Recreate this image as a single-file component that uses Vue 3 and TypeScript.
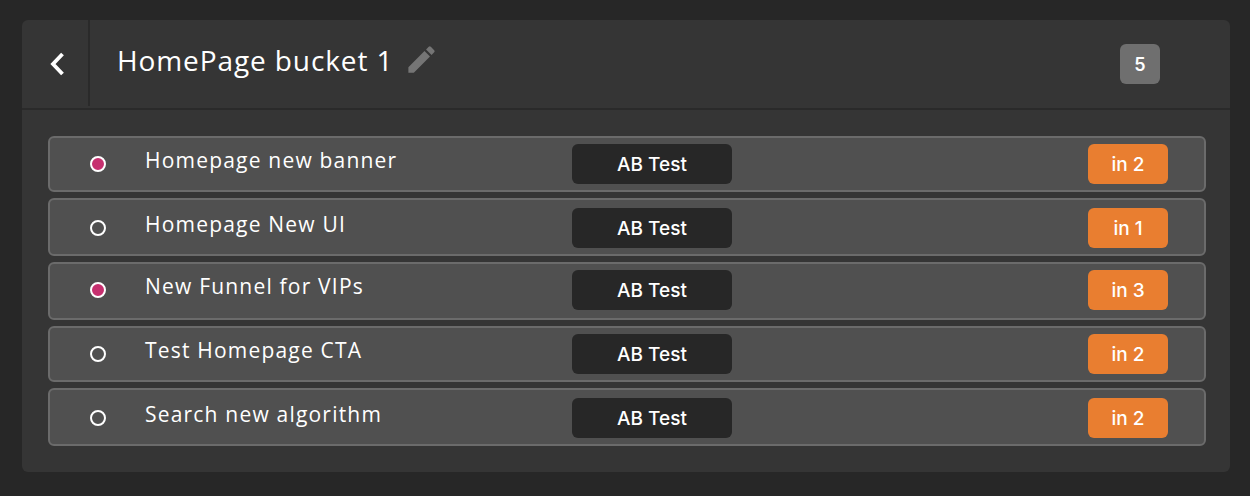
<script setup lang="ts">
type Experiment = { name: string; live: boolean; tag: string; tall: boolean; offset: boolean }

const experiments: Experiment[] = [
  { name: "Homepage new banner", live: true, tag: "in 2", tall: false, offset: false },
  { name: "Homepage New UI", live: false, tag: "in 1", tall: true, offset: true },
  { name: "New Funnel for VIPs", live: true, tag: "in 3", tall: true, offset: false },
  { name: "Test Homepage CTA", live: false, tag: "in 2", tall: false, offset: false },
  { name: "Search new algorithm", live: false, tag: "in 2", tall: true, offset: true },
];
</script>

<template>
  <div class="page">
    <div class="panel">
      <div class="header">
        <button class="back">
          <svg width="18" height="26" viewBox="0 0 18 26">
            <path d="M14.5 3 L5 13 L14.5 23" fill="none" stroke="#fff" stroke-width="3.8" />
          </svg>
        </button>
        <div class="title-wrap">
          <h1 class="title">HomePage bucket 1</h1>
          <svg class="edit" width="35" height="35" viewBox="0 0 24 24">
            <path fill="#757575" d="M3 17.25V21h3.75L17.81 9.94l-3.75-3.75L3 17.25zM20.71 7.04a1 1 0 0 0 0-1.41l-2.34-2.34a1 1 0 0 0-1.41 0l-1.83 1.83 3.75 3.75 1.83-1.83z" />
          </svg>
        </div>
        <span class="count">5</span>
      </div>
      <div class="list">
        <div v-for="item in experiments" :key="item.name" :class="['row', { tall: item.tall, offset: item.offset }]">
          <span :class="['dot', { live: item.live }]"></span>
          <span class="name">{{ item.name }}</span>
          <span class="type">AB Test</span>
          <span class="tag">{{ item.tag }}</span>
        </div>
      </div>
    </div>
  </div>
</template>

<style>
html,
body {
  margin: 0;
  background: #272727;
}
</style>

<style scoped>
.page {
  height: 496px;
  box-sizing: border-box;
  padding: 20px 20px 24px 22px;
  background: #272727;
  font-family: "Inter", sans-serif;
  overflow: hidden;
}
.panel {
  height: 452px;
  background: #353535;
  border-radius: 6px;
  display: flex;
  flex-direction: column;
}
.header {
  height: 88px;
  flex: none;
  display: flex;
  border-bottom: 2px solid #2a2a2a;
}
.back {
  width: 62px;
  height: 84px;
  flex: none;
  padding: 2px 0 0 4px;
  margin: 0;
  background: none;
  border: none;
  border-right: 2px solid #2a2a2a;
  display: flex;
  align-items: center;
  justify-content: center;
  box-sizing: content-box;
}
.title-wrap {
  flex: 1;
  display: flex;
  align-items: flex-start;
  gap: 11px;
  padding: 21px 0 0 27px;
}
.title {
  margin: 0;
  font-family: "Open Sans", sans-serif;
  font-size: 28px;
  line-height: 38px;
  font-weight: 400;
  letter-spacing: 0.9px;
  color: #fff;
}
.edit {
  margin-top: 1px;
}
.count {
  width: 40px;
  height: 40px;
  margin: 24px 70px 0 0;
  border-radius: 6px;
  background: #6f6f6f;
  color: #fff;
  font-size: 18px;
  font-weight: 600;
  display: flex;
  align-items: center;
  justify-content: center;
}
.list {
  padding: 26px 24px 0 26px;
  display: flex;
  flex-direction: column;
  gap: 6px;
}
.row {
  height: 56px;
  box-sizing: border-box;
  border: 2px solid #6b6b6b;
  border-radius: 6px;
  background: #505050;
  display: flex;
  align-items: flex-start;
  padding-top: 6px;
}
.row.tall {
  height: 58px;
}
.row.offset {
  padding-top: 8px;
}
.dot {
  width: 16px;
  height: 16px;
  box-sizing: border-box;
  border: 2px solid #fff;
  border-radius: 50%;
  margin: 12px 0 0 40px;
  flex: none;
}
.dot.live {
  background: #c6306f;
}
.name {
  width: 427px;
  flex: none;
  margin-left: 39px;
  margin-top: 3px;
  font-family: "Open Sans", sans-serif;
  font-size: 21px;
  line-height: 26px;
  font-weight: 400;
  letter-spacing: 1.2px;
  color: #fff;
}
.type {
  width: 160px;
  height: 40px;
  flex: none;
  border-radius: 6px;
  background: #272727;
  color: #fff;
  font-size: 19px;
  font-weight: 500;
  display: flex;
  align-items: center;
  justify-content: center;
}
.tag {
  width: 80px;
  height: 40px;
  flex: none;
  margin-left: 356px;
  border-radius: 6px;
  background: #e97e30;
  color: #fff;
  font-size: 19px;
  font-weight: 500;
  display: flex;
  align-items: center;
  justify-content: center;
}
</style>
